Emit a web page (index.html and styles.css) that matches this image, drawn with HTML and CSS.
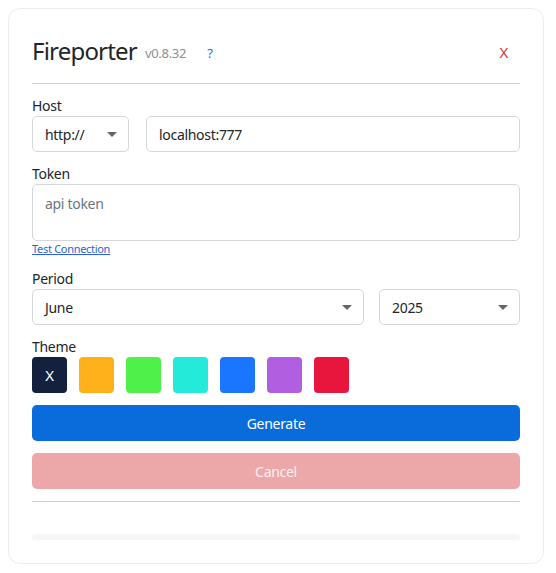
FILE: index.html
```html
<!DOCTYPE html>
<html>
<head>
<meta charset="utf-8">
<link rel="stylesheet" href="styles.css">
</head>
<body>
<div class="card">
  <div class="header">
    <span class="title">Fireporter</span>
    <span class="version">v0.8.32</span>
    <a class="help">?</a>
    <span class="spacer"></span>
    <span class="close">X</span>
  </div>
  <div class="rule top-rule"></div>

  <div class="label">Host</div>
  <div class="row host-row">
    <div class="select proto"><span>http://</span><span class="caret"></span></div>
    <div class="input host">localhost:777</div>
  </div>

  <div class="label token-label">Token</div>
  <div class="textarea">api token</div>
  <a class="test-link">Test Connection</a>

  <div class="label period-label">Period</div>
  <div class="row period-row">
    <div class="select month"><span>June</span><span class="caret"></span></div>
    <div class="select year"><span>2025</span><span class="caret"></span></div>
  </div>

  <div class="label theme-label">Theme</div>
  <div class="swatches">
    <div class="swatch s-navy">X</div>
    <div class="swatch s-orange"></div>
    <div class="swatch s-green"></div>
    <div class="swatch s-cyan"></div>
    <div class="swatch s-blue"></div>
    <div class="swatch s-purple"></div>
    <div class="swatch s-red"></div>
  </div>

  <div class="btn generate">Generate</div>
  <div class="btn cancel">Cancel</div>
  <div class="rule bottom-rule"></div>
  <div class="bar"></div>
</div>
</body>
</html>
```
FILE: styles.css
```css
html, body {
  margin: 0;
  padding: 0;
  background: #ffffff;
}
body {
  padding: 8px;
  font-family: "Noto Sans", "Open Sans", sans-serif;
  color: #212529;
  font-size: 14px;
  letter-spacing: -0.3px;
}
.card {
  box-sizing: border-box;
  width: 536px;
  height: 556px;
  border: 1px solid #ececec;
  border-radius: 12px;
  padding: 23px 23px 0 23px;
  display: flex;
  flex-direction: column;
}
.header {
  height: 38px;
  display: flex;
  align-items: center;
}
.title {
  font-size: 24px;
  line-height: 28px;
  color: #212529;
  letter-spacing: -0.8px;
}
.version {
  font-size: 13px;
  color: #8a8f94;
  margin-left: 8px;
  margin-top: 3px;
}
.help {
  font-size: 13px;
  color: #1b6ff0;
  margin-left: 21px;
  margin-top: 3px;
}
.spacer { flex: 1; }
.close {
  font-size: 15px;
  color: #dc3545;
  margin-right: 12px;
  margin-top: 2px;
}
.rule {
  height: 1px;
  background: #cfd1d4;
}
.top-rule { margin-top: 13px; }
.label {
  line-height: 20px;
  font-size: 14px;
}
.top-rule + .label { margin-top: 12px; }
.row {
  display: flex;
  gap: 17px;
}
.select, .input, .textarea {
  box-sizing: border-box;
  border: 1px solid #d3d7dc;
  border-radius: 5px;
  height: 36px;
  display: flex;
  align-items: center;
  padding: 0 12px;
  font-size: 14px;
}
.select { justify-content: space-between; }
.caret {
  width: 0;
  height: 0;
  border-left: 5px solid transparent;
  border-right: 5px solid transparent;
  border-top: 5px solid #5f666d;
  margin-right: -1px;
}
.proto { width: 97px; }
.host { flex: 1; }
.token-label { margin-top: 12px; }
.textarea {
  height: 57px;
  align-items: flex-start;
  padding-top: 9px;
  color: #6c757d;
}
.test-link {
  font-size: 11px;
  line-height: 15px;
  color: #2c63d8;
  text-decoration: underline;
  align-self: flex-start;
}
.period-label { margin-top: 13px; }
.period-row { gap: 15px; }
.month { flex: 1; }
.year { width: 141px; }
.theme-label { margin-top: 12px; }
.swatches {
  display: flex;
  gap: 12px;
}
.swatch {
  width: 35px;
  height: 36px;
  border-radius: 4px;
  display: flex;
  align-items: center;
  justify-content: center;
  color: #ffffff;
  font-size: 15px;
}
.s-navy { background: #13213f; }
.s-orange { background: #ffb11b; }
.s-green { background: #4ff04a; }
.s-cyan { background: #24ead9; }
.s-blue { background: #1a75ff; }
.s-purple { background: #b25ee0; }
.s-red { background: #e8163c; }
.btn {
  height: 36px;
  border-radius: 5px;
  display: flex;
  align-items: center;
  justify-content: center;
  color: #ffffff;
  font-size: 14px;
}
.generate {
  margin-top: 12px;
  background: #0a6cdb;
}
.cancel {
  margin-top: 12px;
  background: #eca7a8;
  color: #fdf1f1;
}
.bottom-rule { margin-top: 12px; }
.bar {
  margin-top: 32px;
  height: 6px;
  border-radius: 3px;
  background: #f5f6f8;
}
```
